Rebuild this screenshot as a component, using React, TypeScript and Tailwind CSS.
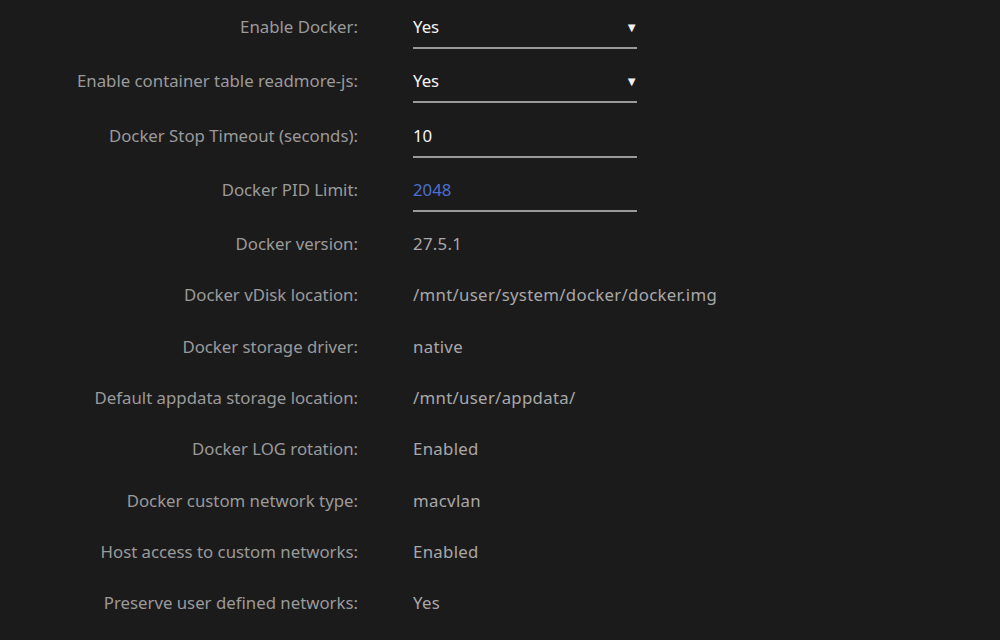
import React from "react";

const font = { fontFamily: '"Noto Sans", "Open Sans", sans-serif' };

function InputRow({ label, value, select, blue }: { label: string; value: string; select?: boolean; blue?: boolean }) {
  return (
    <div className="flex h-[54.3px] items-start">
      <div className="w-[358px] shrink-0 pt-[17px] text-right text-[16.8px] leading-[20px] text-[#9a9a9a]">{label}</div>
      <div className="ml-[55px] w-[224px]">
        <div className="flex items-center justify-between border-b-2 border-[#9a9a9a] pb-[10px] pt-[17px]">
          <span className={`text-[16.8px] leading-[20px] ${blue ? "text-[#4d6fcf]" : "text-[#f4f4f4]"}`}>{value}</span>
          {select && <span className="mr-[-1px] text-[13px] leading-[20px] text-[#f0f0f0]">▼</span>}
        </div>
      </div>
    </div>
  );
}

function StaticRow({ label, value }: { label: string; value: string }) {
  return (
    <div className="flex h-[51.3px] items-start">
      <div className="w-[358px] shrink-0 pt-[17px] text-right text-[16.8px] leading-[20px] text-[#9a9a9a]">{label}</div>
      <div className="ml-[55px] pt-[17px] text-[16.8px] leading-[20px] tracking-[0.3px] text-[#a8a8a8]">{value}</div>
    </div>
  );
}

export default function App() {
  return (
    <div className="h-[640px] w-[1000px] overflow-hidden bg-[#1c1b1c]" style={font}>
      <InputRow label="Enable Docker:" value="Yes" select />
      <InputRow label="Enable container table readmore-js:" value="Yes" select />
      <InputRow label="Docker Stop Timeout (seconds):" value="10" />
      <InputRow label="Docker PID Limit:" value="2048" blue />
      <StaticRow label="Docker version:" value="27.5.1" />
      <StaticRow label="Docker vDisk location:" value="/mnt/user/system/docker/docker.img" />
      <StaticRow label="Docker storage driver:" value="native" />
      <StaticRow label="Default appdata storage location:" value="/mnt/user/appdata/" />
      <StaticRow label="Docker LOG rotation:" value="Enabled" />
      <StaticRow label="Docker custom network type:" value="macvlan" />
      <StaticRow label="Host access to custom networks:" value="Enabled" />
      <StaticRow label="Preserve user defined networks:" value="Yes" />
    </div>
  );
}
